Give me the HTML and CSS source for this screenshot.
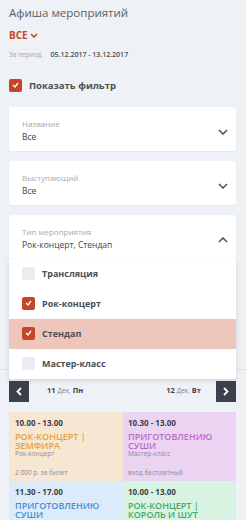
FILE: index.html
```html
<!DOCTYPE html>
<html lang="ru">
<head>
<meta charset="utf-8">
<link rel="stylesheet" href="styles.css">
</head>
<body>
<div class="page">
  <section class="filters">
    <div class="wrap">
      <h1 class="title">Афиша мероприятий</h1>
      <div class="all">ВСЕ <svg class="all-chev" width="8" height="5" viewBox="0 0 8 5"><path d="M1 1 L4 4 L7 1" fill="none" stroke="#c4452a" stroke-width="1.6"/></svg></div>
      <div class="period"><span class="period-label">За период</span><span class="period-dates">05.12.2017 - 13.12.2017</span></div>
      <label class="show-filter"><span class="cb cb-on"><svg width="7" height="6" viewBox="0 0 7 6"><path d="M1 3 L3 5 L6 1" fill="none" stroke="#fff" stroke-width="1.3"/></svg></span>Показать фильтр</label>

      <div class="card">
        <div class="card-text"><div class="card-label">Название</div><div class="card-value">Все</div></div>
        <svg class="chev" width="10" height="6" viewBox="0 0 10 6"><path d="M1 1 L5 5 L9 1" fill="none" stroke="#4a4f57" stroke-width="1.5"/></svg>
      </div>
      <div class="card">
        <div class="card-text"><div class="card-label">Выступающий</div><div class="card-value">Все</div></div>
        <svg class="chev" width="10" height="6" viewBox="0 0 10 6"><path d="M1 1 L5 5 L9 1" fill="none" stroke="#4a4f57" stroke-width="1.5"/></svg>
      </div>
      <div class="card card-open">
        <div class="card-text"><div class="card-label">Тип мероприятия</div><div class="card-value">Рок-концерт, Стендап</div></div>
        <svg class="chev" width="10" height="6" viewBox="0 0 10 6"><path d="M1 5 L5 1 L9 5" fill="none" stroke="#4a4f57" stroke-width="1.5"/></svg>
        <ul class="dropdown">
          <li class="opt"><span class="cb"></span>Трансляция</li>
          <li class="opt"><span class="cb cb-on"><svg width="7" height="6" viewBox="0 0 7 6"><path d="M1 3 L3 5 L6 1" fill="none" stroke="#fff" stroke-width="1.3"/></svg></span>Рок-концерт</li>
          <li class="opt opt-hl"><span class="cb cb-on"><svg width="7" height="6" viewBox="0 0 7 6"><path d="M1 3 L3 5 L6 1" fill="none" stroke="#fff" stroke-width="1.3"/></svg></span>Стендап</li>
          <li class="opt"><span class="cb"></span>Мастер-класс</li>
        </ul>
      </div>
    </div>
  </section>

  <div class="wrap">
    <nav class="days">
      <button class="nav-btn"><svg width="6" height="9" viewBox="0 0 6 9"><path d="M5 1 L1.5 4.5 L5 8" fill="none" stroke="#fff" stroke-width="1.8"/></svg></button>
      <div class="day-list">
        <span class="day"><b>11</b> <span class="mon">Дек,</span> <b>Пн</b></span>
        <span class="day"><b>12</b> <span class="mon">Дек,</span> <b>Вт</b></span>
      </div>
      <button class="nav-btn"><svg width="6" height="9" viewBox="0 0 6 9"><path d="M1 1 L4.5 4.5 L1 8" fill="none" stroke="#fff" stroke-width="1.8"/></svg></button>
    </nav>

    <div class="events">
      <div class="ev ev-peach">
        <div class="ev-time">10.00 - 13.00</div>
        <div class="ev-title">РОК-КОНЦЕРТ | ЗЕМФИРА</div>
        <div class="ev-type">Рок-концерт</div>
        <div class="ev-price">2 000 р. за билет</div>
      </div>
      <div class="ev ev-lilac">
        <div class="ev-time">10.30 - 13.00</div>
        <div class="ev-title">ПРИГОТОВЛЕНИЮ СУШИ</div>
        <div class="ev-type">Мастер-класс</div>
        <div class="ev-price">вход бесплатный</div>
      </div>
      <div class="ev ev-blue">
        <div class="ev-time">11.30 - 17.00</div>
        <div class="ev-title">ПРИГОТОВЛЕНИЮ СУШИ</div>
        <div class="ev-type">Мастер-класс</div>
        <div class="ev-price">вход бесплатный</div>
      </div>
      <div class="ev ev-green">
        <div class="ev-time">10.00 - 13.00</div>
        <div class="ev-title">РОК-КОНЦЕРТ | КОРОЛЬ И ШУТ</div>
        <div class="ev-type">Рок-концерт</div>
        <div class="ev-price">1 500 р. за билет</div>
      </div>
    </div>
  </div>
</div>
</body>
</html>
```

FILE: styles.css
```css
* { box-sizing: border-box; }
html, body { margin: 0; padding: 0; }
body {
  background: #eef1f6;
  font-family: "Open Sans", "Noto Sans", sans-serif;
  color: #4a4f57;
  width: 246px;
  height: 520px;
  overflow: hidden;
}
.wrap { padding: 0 10px 0 9px; }
.filters {
  padding-top: 5px;
  padding-bottom: 110px;
  border-bottom: 1px solid #dde2ea;
}
.title {
  margin: 0;
  font-size: 11.5px;
  line-height: 16px;
  font-weight: 400;
  color: #5a5f66;
}
.all {
  margin-top: 7px;
  font-size: 10px;
  line-height: 14px;
  font-weight: 700;
  color: #c4452a;
  display: flex;
  align-items: center;
  gap: 2px;
}
.period {
  margin-top: 8px;
  font-size: 7px;
  line-height: 10px;
  display: flex;
  gap: 9px;
}
.period-label { color: #a4a9b1; font-size: 6.5px; }
.period-dates { color: #4a4f57; font-weight: 600; }
.show-filter {
  margin-top: 18px;
  display: flex;
  align-items: center;
  gap: 7px;
  font-size: 9.5px;
  font-weight: 700;
  color: #4a4f57;
  height: 14px;
}
.cb {
  width: 13px;
  height: 13px;
  border-radius: 2px;
  background: #e9edf3;
  display: inline-flex;
  align-items: center;
  justify-content: center;
  flex: none;
}
.cb-on { background: #c4452a; }
.card {
  margin-top: 15px;
  background: #fff;
  border-radius: 3px;
  padding: 10px 8px 8px 13px;
  display: flex;
  align-items: center;
  justify-content: space-between;
  box-shadow: 0 1px 2px rgba(60, 70, 90, 0.05);
}
.card + .card { margin-top: 10px; }
.card-label {
  font-size: 8px;
  line-height: 13px;
  color: #a4a9b1;
}
.card-value {
  font-size: 8.5px;
  line-height: 13px;
  color: #3e434a;
}
.chev { flex: none; margin-top: 3px; }
.card-open { position: relative; }
.dropdown {
  position: absolute;
  left: 0;
  right: 0;
  top: 100%;
  margin: 0;
  padding: 0;
  list-style: none;
  background: #fff;
  border-radius: 0 0 3px 3px;
  box-shadow: 0 2px 5px rgba(40, 50, 70, 0.14);
  z-index: 2;
}
.opt {
  height: 30px;
  display: flex;
  align-items: center;
  gap: 7px;
  padding-left: 13px;
  padding-bottom: 2px;
  font-size: 9px;
  font-weight: 700;
  color: #4a4f57;
}
.opt-hl { background: #efc6bb; }
.days {
  margin-top: 11px;
  display: flex;
  align-items: center;
  height: 21px;
}
.nav-btn {
  width: 20px;
  height: 21px;
  border: 0;
  padding: 0;
  background: #3b414b;
  display: flex;
  align-items: center;
  justify-content: center;
  flex: none;
}
.day-list {
  flex: 1;
  display: flex;
  justify-content: space-between;
  padding: 0 15px 0 18px;
  margin-top: -4px;
}
.day { font-size: 7.5px; color: #3e434a; }
.day b { font-weight: 700; }
.mon { font-size: 6.5px; color: #7d828a; }
.events {
  margin-top: 10px;
  display: grid;
  grid-template-columns: 114px 113px;
  grid-auto-rows: 69px;
}
.ev {
  padding: 4.5px 6px 4.5px 6px;
  display: flex;
  flex-direction: column;
}
.ev:nth-child(even) { padding-left: 5px; }
.ev-peach { background: #f7e6d2; }
.ev-lilac { background: #edd3f2; }
.ev-blue { background: #dcebf9; }
.ev-green { background: #d9f3e2; }
.ev-time {
  font-size: 8px;
  line-height: 11px;
  font-weight: 700;
  color: #3a3f47;
}
.ev-title {
  margin-top: 4.5px;
  font-size: 9px;
  line-height: 9px;
  font-weight: 600;
}
.ev-peach .ev-title { color: #e0a445; }
.ev-lilac .ev-title { color: #b96ac8; }
.ev-blue .ev-title { color: #4a8dd2; }
.ev-green .ev-title { color: #47a866; }
.ev-type {
  font-size: 6.5px;
  line-height: 8px;
  color: #8a8f96;
}
.ev-price {
  margin-top: auto;
  font-size: 6.5px;
  line-height: 8px;
  color: #8a8f96;
}
```
